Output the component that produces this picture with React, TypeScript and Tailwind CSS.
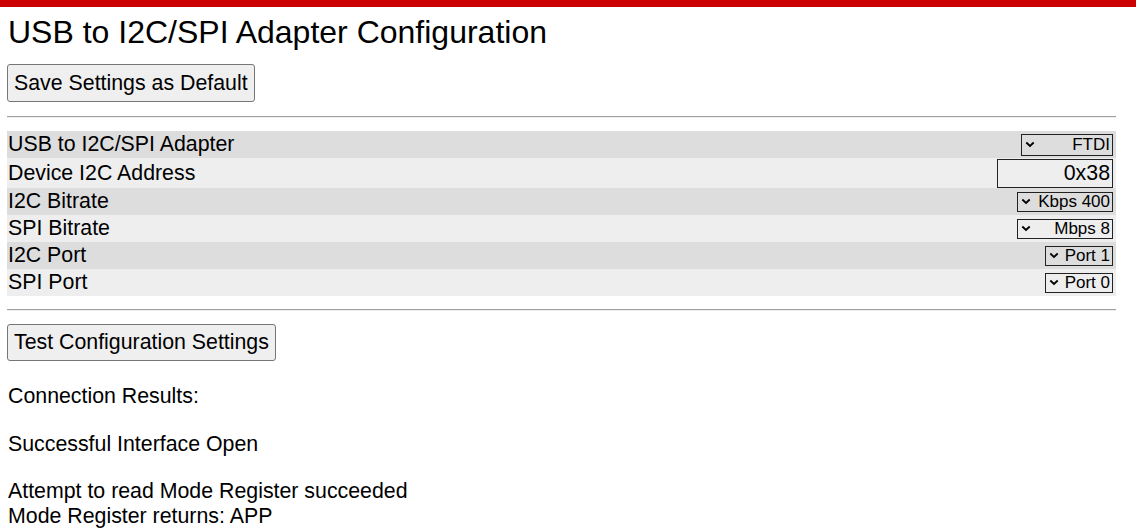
import React from "react";

function Chevron() {
  return (
    <svg width="10" height="7" viewBox="0 0 10 7" className="shrink-0">
      <path d="M1.3 1.5 L5 5 L8.7 1.5" fill="none" stroke="#000" strokeWidth="1.8" />
    </svg>
  );
}

function FakeSelect({ value, w, h }: { value: string; w: string; h: string }) {
  return (
    <div
      className={`${w} ${h} flex items-center justify-between border border-[#222] pl-[3px] pr-[2px] text-[17px] leading-none`}
    >
      <Chevron />
      <span>{value}</span>
    </div>
  );
}

const rows: { label: string; kind: "select" | "input"; value: string; w: string; h: string; bg: string; rh: string }[] = [
  { label: "USB to I2C/SPI Adapter", kind: "select", value: "FTDI", w: "w-[92px]", h: "h-[22px]", bg: "bg-[#dddddd]", rh: "h-[27px]" },
  { label: "Device I2C Address", kind: "input", value: "0x38", w: "w-[116px]", h: "h-[29px]", bg: "bg-[#eeeeee]", rh: "h-[30px]" },
  { label: "I2C Bitrate", kind: "select", value: "Kbps 400", w: "w-[96px]", h: "h-[20px]", bg: "bg-[#dddddd]", rh: "h-[27px]" },
  { label: "SPI Bitrate", kind: "select", value: "Mbps 8", w: "w-[96px]", h: "h-[20px]", bg: "bg-[#eeeeee]", rh: "h-[27px]" },
  { label: "I2C Port", kind: "select", value: "Port 1", w: "w-[68px]", h: "h-[20px]", bg: "bg-[#dddddd]", rh: "h-[27px]" },
  { label: "SPI Port", kind: "select", value: "Port 0", w: "w-[68px]", h: "h-[20px]", bg: "bg-[#eeeeee]", rh: "h-[27px]" },
];

export default function App() {
  return (
    <div
      className="min-h-[528px] bg-white text-black text-[21.33px] leading-[25px]"
      style={{ fontFamily: '"Liberation Sans", Arial, sans-serif' }}
    >
      <div className="h-[7px] bg-[#cc0000]" />
      <div className="w-[1116px] pl-[7px]">
        <h1 className="mt-[7px] pl-[1px] text-[32px] leading-[37px] font-normal">
          USB to I2C/SPI Adapter Configuration
        </h1>
        <button className="mt-[13px] h-[38px] px-[6px] border border-[#767676] rounded-[3px] bg-[#efefef] text-[21.33px] leading-[25px]">
          Save Settings as Default
        </button>
        <div className="mt-[14px] h-[2px] border-t border-t-[#a0a0a0] border-b border-b-[#eeeeee]" />
        <div className="mt-[13px] flex flex-col">
          {rows.map((r) => (
            <div key={r.label} className={`${r.rh} ${r.bg} flex items-center justify-between pr-[3px]`}>
              <span className="pl-[1px]">{r.label}</span>
              {r.kind === "select" ? (
                <FakeSelect value={r.value} w={r.w} h={r.h} />
              ) : (
                <div className={`${r.w} ${r.h} flex items-center justify-end border border-[#222] pr-[2px] text-[21.33px]`}>
                  {r.value}
                </div>
              )}
            </div>
          ))}
        </div>
        <div className="mt-[13px] h-[2px] border-t border-t-[#a0a0a0] border-b border-b-[#eeeeee]" />
        <button className="mt-[13px] h-[37px] px-[6px] border border-[#767676] rounded-[3px] bg-[#efefef] text-[21.33px] leading-[25px]">
          Test Configuration Settings
        </button>
        <div className="pl-[1px]">
          <p className="mt-[23px]">Connection Results:</p>
          <p className="mt-[23px]">Successful Interface Open</p>
          <p className="mt-[22px]">Attempt to read Mode Register succeeded</p>
          <p>Mode Register returns: APP</p>
        </div>
      </div>
    </div>
  );
}
